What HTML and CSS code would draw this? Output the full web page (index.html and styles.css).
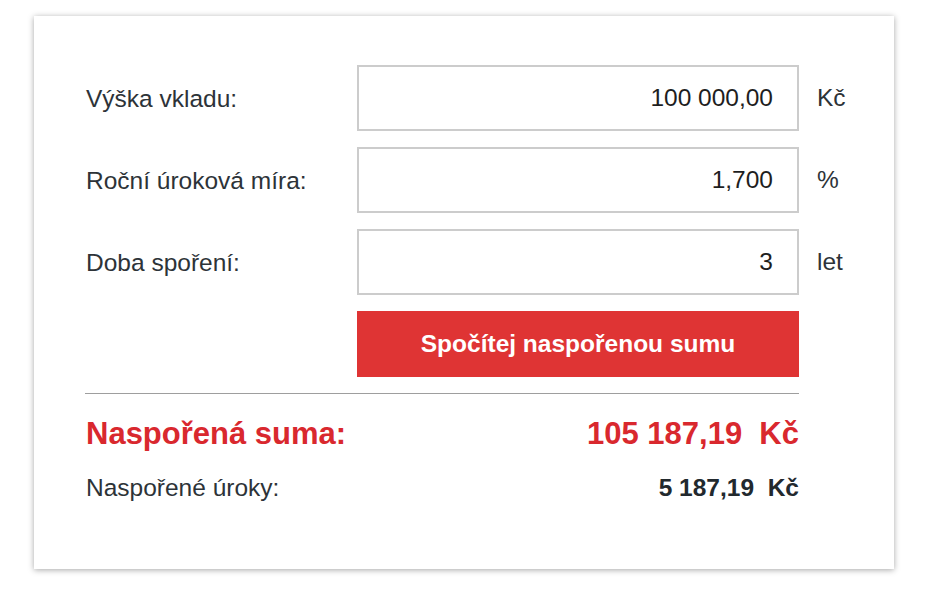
FILE: index.html
```html
<!DOCTYPE html>
<html lang="cs">
<head>
<meta charset="utf-8">
<title>Kalkulačka spoření</title>
<link rel="stylesheet" href="styles.css">
</head>
<body>
<div class="page">
  <div class="card">
    <div class="form">
      <label class="label">Výška vkladu:</label>
      <div class="input">100 000,00</div>
      <span class="unit">Kč</span>

      <label class="label">Roční úroková míra:</label>
      <div class="input">1,700</div>
      <span class="unit">%</span>

      <label class="label">Doba spoření:</label>
      <div class="input">3</div>
      <span class="unit">let</span>

      <span></span>
      <button class="button">Spočítej naspořenou sumu</button>
      <span></span>
    </div>
    <div class="divider"></div>
    <div class="result result-main">
      <span>Naspořená suma:</span>
      <span class="value">105 187,19&nbsp; Kč</span>
    </div>
    <div class="result result-sub">
      <span>Naspořené úroky:</span>
      <span class="value">5 187,19&nbsp;&nbsp;Kč</span>
    </div>
  </div>
</div>
</body>
</html>
```
FILE: styles.css
```css
html, body {
  margin: 0;
  padding: 0;
  background: #ffffff;
}
body {
  font-family: "Liberation Sans", Arial, sans-serif;
  color: #2d3338;
}
.page {
  padding: 16px 0 28px 34px;
}
.card {
  width: 860px;
  height: 553px;
  box-sizing: border-box;
  background: #fff;
  box-shadow: 0 1px 6px rgba(0, 0, 0, 0.35);
  padding: 49px 95px 0 51px;
}
.form {
  display: grid;
  grid-template-columns: 272px 442px 1fr;
  grid-auto-rows: 66px;
  row-gap: 16px;
  align-items: center;
}
.label {
  font-size: 24.5px;
  color: #2d3338;
  padding-left: 1px;
  padding-top: 1px;
}
.input {
  height: 66px;
  box-sizing: border-box;
  border: 2px solid #cccccc;
  display: flex;
  align-items: center;
  justify-content: flex-end;
  padding-right: 24px;
  font-size: 24.5px;
  color: #1e1e1e;
}
.unit {
  font-size: 24.5px;
  padding-left: 18px;
  color: #2d3338;
}
.button {
  height: 66px;
  border: none;
  background: #df3434;
  color: #fff;
  font-family: "Liberation Sans", Arial, sans-serif;
  font-weight: bold;
  font-size: 24.5px;
  padding: 0;
}
.divider {
  width: 714px;
  height: 1px;
  background: #9e9e9e;
  margin-top: 16px;
}
.result {
  width: 714px;
  display: flex;
  justify-content: space-between;
  align-items: baseline;
  box-sizing: border-box;
  padding-left: 1px;
}
.result-main {
  margin-top: 22px;
  font-size: 31px;
  line-height: 36px;
  font-weight: bold;
  color: #d9282e;
}
.result-sub {
  margin-top: 22px;
  font-size: 24.5px;
  line-height: 28px;
}
.result-sub .value {
  font-weight: bold;
  color: #22292e;
}
```
